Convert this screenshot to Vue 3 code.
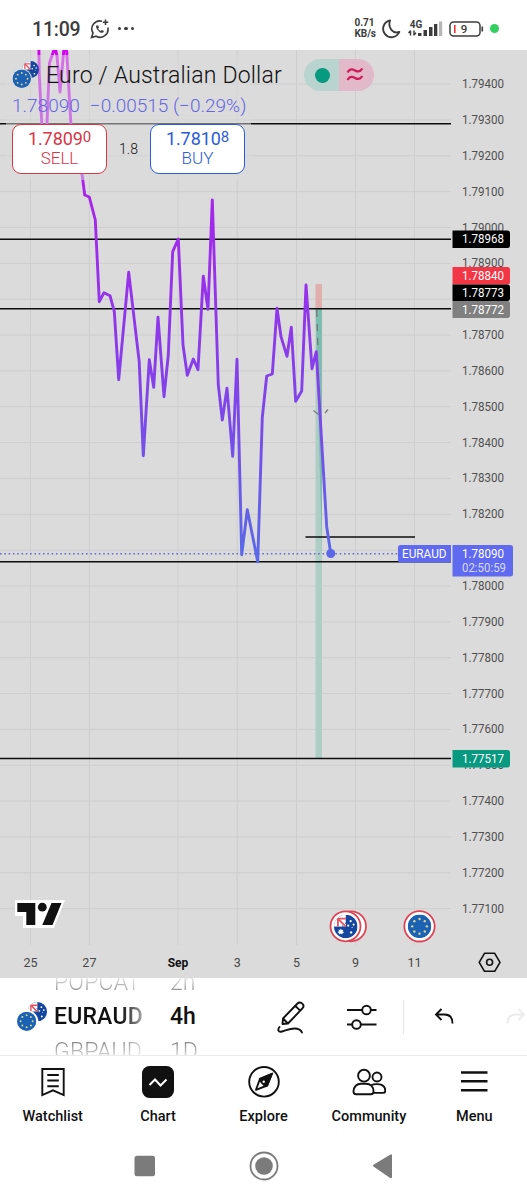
<template>
  <div class="app">
    <!-- shared flag symbols -->
    <svg class="defs" width="0" height="0">
      <symbol id="flag-eu" viewBox="0 0 24 24">
        <circle cx="12" cy="12" r="12" fill="#1b62b4" />
        <circle v-for="s in euStars" :key="s.id" :cx="s.x" :cy="s.y" r="1.2" fill="#e0d68a" />
      </symbol>
      <symbol id="flag-au" viewBox="0 0 24 24">
        <clipPath id="au-clip"><circle cx="12" cy="12" r="12" /></clipPath>
        <g clip-path="url(#au-clip)">
          <rect width="24" height="24" fill="#1446a0" />
          <rect width="12" height="12" fill="#fff" />
          <path d="M4 12V4h8" fill="none" stroke="#e8505b" stroke-width="1.8" />
          <path d="M4.5 4.5 12 12" stroke="#e8505b" stroke-width="1.8" />
          <path d="M8.5 12v-1.5l1.5 1.5zM12 8h-1.5l1.5 1.5z" fill="#1446a0" />
          <path d="m7 14 .8 1.5 1.7-.3-.5 1.6 1.3 1.2-1.6.5-.3 1.7-1.4-1.1-1.5 1.1-.3-1.7-1.6-.5L5 16.8l-.5-1.6 1.7.3z" fill="#fff" />
          <circle cx="17" cy="6.5" r="1.1" fill="#fff" />
          <circle cx="20" cy="10" r="1.1" fill="#fff" />
          <circle cx="14.5" cy="11" r="1.1" fill="#fff" />
          <circle cx="17.5" cy="18" r="1.2" fill="#fff" />
          <circle cx="18.5" cy="13" r=".6" fill="#fff" />
        </g>
      </symbol>
    </svg>

    <!-- status bar -->
    <header class="status">
      <span class="clock">11:09</span>
      <svg class="whatsapp" width="20" height="20" viewBox="0 0 20 20" fill="none" stroke="#3c3c3c" stroke-width="1.6">
        <path d="M12 2.2A8 8 0 0 0 3 14l-1.5 4.5L6 17.2A8 8 0 0 0 17.8 8.5" />
        <path d="M6.5 6.2c-1.2 1.5.2 4 2 5.7s4 2.7 5.3 1.2l-.2-1.3-1.8-.8-1 1c-1.3-.5-2.2-1.5-2.7-2.5l.9-1-.8-2z" fill="#3c3c3c" stroke="none" />
        <path d="M15.5.5v5.5M12.8 3.2h5.5" />
      </svg>
      <span class="dots"><i></i><i></i><i></i></span>
      <span class="speed">0.71<br />KB/s</span>
      <svg class="moon" width="20" height="20" viewBox="0 0 20 20" fill="none" stroke="#3c3c3c" stroke-width="1.9" stroke-linejoin="round">
        <path d="M9 1.5A8.4 8.4 0 1 0 18.3 13C12 15 6.5 9 9 1.5z" />
      </svg>
      <svg class="signal" width="35" height="20" viewBox="0 0 35 20">
        <text x="1.8" y="8.8" textLength="12.5" font-size="10.5" font-weight="700" fill="#3c3c3c" lengthAdjust="spacingAndGlyphs">4G</text>
        <path d="M2.5 11.5v5M0.5 14l2-2.2M6 11.5v5M6 16l2-2.2" stroke="#3c3c3c" stroke-width="1.5" />
        <rect x="10" y="14" width="3.5" height="3" fill="#3c3c3c" />
        <rect x="15.5" y="11" width="3.5" height="6" fill="#3c3c3c" />
        <rect x="21" y="8" width="3.5" height="9" fill="#3c3c3c" />
        <rect x="26" y="5" width="3.3" height="12" fill="#3c3c3c" />
        <rect x="31" y="2.5" width="3.2" height="14.5" fill="#b5b5b5" />
      </svg>
      <svg class="battery" width="35" height="16" viewBox="0 0 35 16">
        <rect x="1" y="1" width="30" height="14" rx="3.5" fill="none" stroke="#3c3c3c" stroke-width="1.5" />
        <rect x="32.5" y="5.5" width="1.6" height="5" fill="#3c3c3c" />
        <rect x="5" y="4" width="1.6" height="8" fill="#e53935" />
        <text x="11.8" y="12" font-size="11.5" font-weight="500" fill="#3c3c3c">9</text>
      </svg>
      <span class="green_dot"></span>
    </header>

    <!-- chart -->
    <section class="chart">
      <svg class="chart_svg" width="527" height="928" viewBox="0 50 527 928">
        <defs>
          <linearGradient id="price-line" gradientUnits="userSpaceOnUse" x1="0" y1="50" x2="0" y2="560">
            <stop offset="0" stop-color="#d500f0" />
            <stop offset="0.3" stop-color="#a626ea" />
            <stop offset="0.65" stop-color="#8440ea" />
            <stop offset="1" stop-color="#596ae8" />
          </linearGradient>
        </defs>

        <g stroke="#cecece" stroke-width="1">
          <line v-for="p in prices" :key="p.label" x1="0" :y1="p.y" x2="451" :y2="p.y" />
          <line v-for="d in dates" :key="d.label" :x1="d.x" y1="50" :x2="d.x" y2="945" />
        </g>

        <g class="scale">
          <text v-for="p in prices" :key="p.label" x="462" :y="p.y + 4" textLength="42" lengthAdjust="spacingAndGlyphs">{{ p.label }}</text>
        </g>
        <g class="dates">
          <text v-for="d in dates" :key="d.label" :x="d.x" y="966.5" :class="{ month: d.label === 'Sep' }">{{ d.label }}</text>
        </g>

        <!-- short position -->
        <rect x="315.5" y="284" width="6.5" height="25" fill="#dfaead" />
        <rect x="315.5" y="309" width="6.5" height="450" fill="#adcdc5" />
        <path d="M315.5 309h6.5v243z" fill="#76b9aa" opacity="0.85" />

        <!-- price levels -->
        <g stroke="#0c0c0c" stroke-width="1.5">
          <line x1="0" y1="123.7" x2="451" y2="123.7" />
          <line x1="0" y1="239.3" x2="451" y2="239.3" />
          <line x1="0" y1="308.7" x2="451" y2="308.7" />
          <line x1="0" y1="561.8" x2="451" y2="561.8" />
          <line x1="0" y1="758.6" x2="451" y2="758.6" />
          <line x1="305.5" y1="537" x2="415" y2="537" />
        </g>
        <path d="M316.8 310 318 351" stroke="#717a76" stroke-width="1.3" stroke-dasharray="7 7" />
        <path d="M313.5 410.5 318.5 414.5M325 413l3-3.5" stroke="#7a7f7c" stroke-width="1.3" />
        <line x1="0" y1="553.7" x2="398" y2="553.7" stroke="#6a6ad0" stroke-width="1.5" stroke-dasharray="1.6 2.7" />

        <polyline :points="line" fill="none" stroke="url(#price-line)" stroke-width="2.9" stroke-linejoin="round" />
        <circle cx="330.8" cy="553.5" r="4.5" fill="#5b67e8" />

        <!-- scale tags -->
        <g class="tags">
          <g v-for="t in tags" :key="t.label">
            <path :d="`M452.500 ${t.y}h55a2.5 2.5 0 0 1 2.5 2.5v${t.h - 5}a2.5 2.5 0 0 1-2.5 2.5h-55z`" :fill="t.color" />
            <text x="462" :y="t.y + t.h / 2 + 4.2" textLength="42" lengthAdjust="spacingAndGlyphs">{{ t.label }}</text>
          </g>
          <path d="M452.5 545h58a2.5 2.5 0 0 1 2.5 2.5v26.5a2.5 2.5 0 0 1-2.5 2.5h-58z" fill="#606af0" />
          <text x="462" y="557.7" textLength="42" lengthAdjust="spacingAndGlyphs">1.78090</text>
          <text x="462" y="571.9" textLength="44" lengthAdjust="spacingAndGlyphs" fill-opacity="0.75">02:50:59</text>
          <path d="M451 545h-50.5a2.5 2.5 0 0 0-2.5 2.5v12.5a2.5 2.5 0 0 0 2.5 2.5H451z" fill="#606af0" />
          <text x="402" y="557.7" textLength="44.5" lengthAdjust="spacingAndGlyphs">EURAUD</text>
        </g>

        <!-- TradingView logo -->
        <path d="M15 900h50l-11 28H23v-12h-8z" fill="#fff" />
        <path d="M17.3 903h18v22h-9v-13h-9z" fill="#111" />
        <circle cx="42.3" cy="907.2" r="4.4" fill="#111" />
        <path d="M51.5 903h10l-9 22H42.3z" fill="#111" />

        <!-- economic events -->
        <g fill="#fff" stroke="#df4454" stroke-width="1.8">
          <circle cx="351" cy="926.3" r="15" />
          <circle cx="345.5" cy="926.3" r="15" />
          <circle cx="419.5" cy="926.3" r="15.2" />
        </g>
        <use href="#flag-au" x="334" y="914.8" width="23.5" height="23.5" />
        <use href="#flag-eu" x="407.8" y="914.6" width="23.5" height="23.5" />

        <g fill="none" stroke="#111" stroke-width="1.6" stroke-linejoin="round">
          <path d="M484.5 953.3h10.2l5.3 9-5.3 9h-10.2l-5.3-9z" />
          <circle cx="489.6" cy="962.3" r="3" />
        </g>
      </svg>

      <div class="legend">
        <div class="legend_title">
          <svg class="pair" width="28" height="28" viewBox="0 0 28 28">
            <use href="#flag-au" x="10" y="0" width="17" height="17" />
            <circle cx="9.5" cy="18" r="10.5" fill="#dbdbdb" />
            <use href="#flag-eu" x="0.5" y="8.5" width="18.5" height="18.5" />
          </svg>
          <span class="name">Euro / Australian Dollar</span>
        </div>
        <div class="legend_values">
          <span class="last">1.78090</span>
          <span class="change">−0.00515 (−0.29%)</span>
        </div>
        <div class="trade">
          <button class="trade_button sell">
            <span class="quote">1.7809<sup>0</sup></span>
            <span class="side">SELL</span>
          </button>
          <span class="spread">1.8</span>
          <button class="trade_button buy">
            <span class="quote">1.7810<sup>8</sup></span>
            <span class="side">BUY</span>
          </button>
        </div>
      </div>

      <div class="market">
        <span class="market_open"><i></i></span>
        <span class="market_delay">
          <svg width="18" height="16" viewBox="0 0 18 16" fill="none" stroke="#cf1b5b" stroke-width="2.2">
            <path d="M1.5 5.5C4 1 7 2.3 9 3.5s5 1.7 7.3-2M1.5 13C4 8.5 7 9.8 9 11s5 1.7 7.3-2" />
          </svg>
        </span>
      </div>
    </section>

    <!-- symbol and interval wheels -->
    <section class="toolbar">
      <svg class="pair" width="30" height="30" viewBox="0 0 28 28">
        <use href="#flag-au" x="10" y="0" width="18" height="18" />
        <circle cx="9.5" cy="18.5" r="10.5" fill="#fff" />
        <use href="#flag-eu" x="0" y="9" width="18" height="18" />
      </svg>
      <div class="wheel symbols">
        <span class="previous">POPCAT</span>
        <span class="current">EURAUD</span>
        <span class="next">GBPAUD</span>
      </div>
      <div class="wheel intervals">
        <span class="previous">2h</span>
        <span class="current">4h</span>
        <span class="next">1D</span>
      </div>
      <div class="tools">
        <svg class="pencil" width="30" height="34" viewBox="0 0 30 34" fill="none" stroke="#111" stroke-width="1.9" stroke-linejoin="round" stroke-linecap="round">
          <path d="M6 18.5 20.5 3.5c1.5-1.5 3.5-1.2 4.8.1s1.6 3.3.1 4.8L11 23.5l-5.5.5zM6 18.5l5 5M18.3 5.8l4.9 4.9" />
          <path d="M2.5 27c-2 2.5-1.5 5.500 2.500 4.500 5-1.300 7-3 12.500-3 4.500 0 6.500 1.500 7.500 4" />
        </svg>
        <svg class="sliders" width="30" height="28" viewBox="0 0 30 28" fill="none" stroke="#111" stroke-width="1.9">
          <path d="M0 7h15M24 7h5.5M0 21.5h5M14 21.5h15.5" />
          <circle cx="19.5" cy="7" r="4.3" />
          <circle cx="9.5" cy="21.5" r="4.3" />
        </svg>
        <span class="divider"></span>
        <svg class="undo" width="20" height="17" viewBox="0 0 20 17" fill="none" stroke="#111" stroke-width="1.9">
          <path d="M7.5 1 2 6.5 7.5 12M2 6.5h8.5c5 0 8 3 8 9" />
        </svg>
        <svg class="redo" width="20" height="17" viewBox="0 0 20 17" fill="none" stroke="#ececec" stroke-width="1.9">
          <path d="M12.5 1 18 6.5 12.5 12M18 6.5H9.5c-5 0-8 3-8 9" />
        </svg>
      </div>
    </section>

    <!-- bottom tabs -->
    <nav class="tabs">
      <a class="tab">
        <svg width="32" height="32" viewBox="0 0 32 32" fill="none" stroke="#111" stroke-width="1.9">
          <path d="M5.3 3h21.400v26L16 24.300 5.300 29zM10.300 9h11.500M10.300 14.500h11.500M10.300 20.300h11.500" />
        </svg>
        <span>Watchlist</span>
      </a>
      <a class="tab">
        <svg width="32" height="32" viewBox="0 0 32 32">
          <rect width="32" height="32" rx="7.5" fill="#111" />
          <path d="m7.5 19 5.500-5.500 5.500 6 6-6" fill="none" stroke="#fff" stroke-width="2" />
        </svg>
        <span>Chart</span>
      </a>
      <a class="tab">
        <svg width="32" height="32" viewBox="0 -1 32 32" fill="none" stroke="#111" stroke-width="1.9">
          <circle cx="16" cy="14.8" r="14.8" />
          <path d="M8 22.800 12 11.800 23.800 7 19.200 18.500z" stroke-linejoin="round" />
          <path d="M12 11.800 23.800 7 19.200 18.500l-3-.5-3-3z" fill="#111" />
          <circle cx="15.700" cy="14.800" r="1.200" fill="#fff" stroke="none" />
        </svg>
        <span>Explore</span>
      </a>
      <a class="tab">
        <svg width="34" height="32" viewBox="0 0 34 32" fill="none" stroke="#111" stroke-width="1.9">
          <circle cx="12" cy="9.700" r="5.900" />
          <circle cx="25" cy="11" r="4.500" />
          <path d="M1.500 25.500c0-5 3.500-7.700 7.500-7.700h5c4.300 0 7.500 2.700 7.500 7.700 0 1.800-.8 2.700-2.500 2.700H4c-1.700 0-2.500-.9-2.500-2.700zM19.500 19c1.500-.8 3-.9 5-.9 5.500 0 8.800 2.500 8.800 6.500 0 1.600-.8 2.300-2.200 2.300H21" />
        </svg>
        <span>Community</span>
      </a>
      <a class="tab">
        <svg width="32" height="32" viewBox="0 0 32 32" stroke="#111" stroke-width="2.600">
          <path d="M3 6.500h26.500M3 15.200h26.500M3 24.200h26.500" />
        </svg>
        <span>Menu</span>
      </a>
    </nav>

    <!-- system navigation -->
    <footer class="system">
      <svg width="30" height="30" viewBox="0 0 30 30"><rect x="4.500" y="4.800" width="20.500" height="20.500" rx="2.500" fill="#7b7b7b" /></svg>
      <svg width="30" height="30" viewBox="0 0 30 30">
        <circle cx="15" cy="15" r="13.500" fill="none" stroke="#7b7b7b" stroke-width="1.800" />
        <circle cx="15" cy="15" r="8.800" fill="#7b7b7b" />
      </svg>
      <svg width="30" height="30" viewBox="0 0 30 30"><path d="M6 14.700 23 4.300v22z" fill="#7b7b7b" stroke="#7b7b7b" stroke-width="2" stroke-linejoin="round" /></svg>
    </footer>
  </div>
</template>

<script setup>
// stars on the EU flag
const euStars = Array.from({ length: 8 }, (_, i) => ({
  id: i,
  x: 12 + 7.5 * Math.cos((i * Math.PI) / 4),
  y: 12 + 7.5 * Math.sin((i * Math.PI) / 4)
}))

// price scale, one row every 0.00100
const prices = Array.from({ length: 24 }, (_, i) => ({
  label: (1.794 - i * 0.001).toFixed(5),
  y: 84.1 + i * 35.85
}))

const dates = [
  { label: '25', x: 30.5 },
  { label: '27', x: 89.4 },
  { label: 'Sep', x: 178 },
  { label: '3', x: 237.2 },
  { label: '5', x: 296.5 },
  { label: '9', x: 355.5 },
  { label: '11', x: 414.5 }
]

const tags = [
  { label: '1.78968', y: 230.5, h: 17.5, color: '#000' },
  { label: '1.78840', y: 267, h: 17.5, color: '#f23645' },
  { label: '1.78773', y: 284.5, h: 16.5, color: '#000' },
  { label: '1.78772', y: 301, h: 17, color: '#808080' },
  { label: '1.77517', y: 750, h: 17.5, color: '#089981' }
]

const points = [
  [38.8, 45], [39.3, 75], [42, 128], [46.8, 128], [49.5, 63], [55, 47], [57, 56], [60, 92],
  [64, 48], [66.5, 48], [71, 126], [76, 150], [82.3, 176], [84.7, 195], [89.3, 197], [95.3, 220],
  [99.3, 301.7], [104, 292.7], [110, 295.7], [114.3, 311.7], [118.7, 379.7], [128.7, 272.3],
  [139.2, 361.7], [143.3, 455.7], [149.3, 359.7], [153.7, 387.3], [158, 317.3], [164, 396.7],
  [168.3, 355], [172.7, 251.7], [178.3, 239], [183, 345], [187.3, 375.3], [193.3, 359],
  [198, 369.7], [203.3, 276.3], [208, 309.3], [212.3, 200], [218.3, 385], [222.3, 420],
  [227, 388.3], [232.7, 456.3], [237, 359.3], [241.7, 554.7], [247.3, 509.7], [257.7, 561.7],
  [262.3, 417.3], [266.7, 376], [272.3, 374], [277, 308.3], [281, 336.7], [287, 356.3],
  [291.3, 327.3], [295.7, 401.3], [301.7, 391], [306, 285], [312, 368.7], [316.3, 351.7],
  [326.7, 526.7], [330.7, 553.3]
]
const line = points.map((p) => p.join(',')).join(' ')
</script>

<style>
body {
  margin: 0;
  background: #fff;
}
</style>

<style scoped>
.app {
  width: 527px;
  height: 1200px;
  display: flex;
  flex-direction: column;
  overflow: hidden;
  background: #fff;
  color: #111;
  font-family: Roboto, 'Liberation Sans', sans-serif;
}

svg {
  display: block;
  flex-shrink: 0;
}

.defs {
  position: absolute;
}

/* status bar */
.status {
  height: 50px;
  flex-shrink: 0;
  box-sizing: border-box;
  padding: 7px 28px 0 32px;
  display: flex;
  align-items: center;
  color: #3c3c3c;
}

.clock {
  width: 58px;
  margin-top: 1px;
  font-size: 19.5px;
  font-weight: 500;
  letter-spacing: -0.2px;
}

.dots {
  display: flex;
  gap: 3px;
  margin-left: 8px;
}

.dots i {
  width: 3.4px;
  height: 3.4px;
  border-radius: 50%;
  background: #3c3c3c;
}

.speed {
  margin-left: auto;
  font-size: 10px;
  line-height: 10.5px;
  font-weight: 700;
  white-space: nowrap;
}

.moon {
  margin-left: 5px;
}

.signal {
  margin-left: 7px;
}

.battery {
  margin-left: 6px;
}

.green_dot {
  width: 9px;
  height: 9px;
  margin-left: 6px;
  border-radius: 50%;
  background: #34cf62;
}

/* chart */
.chart {
  position: relative;
  height: 928px;
  flex-shrink: 0;
  background: #dbdbdb;
}

.scale text,
.tags text,
.dates text {
  font-size: 12.5px;
}

.scale text {
  fill: #505050;
}

.tags text {
  fill: #fff;
}

.dates text {
  fill: #484848;
  text-anchor: middle;
}

.dates .month {
  font-size: 12px;
  font-weight: 700;
  fill: #111;
}

.legend {
  position: absolute;
  left: 6px;
  top: 5px;
  width: 245px;
  height: 125px;
  box-sizing: border-box;
  padding-left: 6px;
  background: rgba(219, 219, 219, 0.5);
}

.legend_title {
  display: flex;
  align-items: center;
  height: 40px;
  white-space: nowrap;
}

.name {
  margin-left: 6px;
  font-size: 23px;
  font-weight: 300;
  letter-spacing: 0.2px;
}

.legend_values {
  display: flex;
  gap: 10px;
  height: 22px;
  line-height: 22px;
  font-size: 19px;
  font-weight: 300;
  color: #6366e3;
  white-space: nowrap;
}

.trade {
  display: flex;
  align-items: center;
  padding-top: 7px;
  width: 233px;
}

.trade_button {
  width: 95px;
  height: 50px;
  box-sizing: border-box;
  padding: 3px 0 0;
  display: flex;
  flex-direction: column;
  align-items: center;
  background: #fff;
  border: 1.5px solid;
  border-radius: 9px;
  font-family: inherit;
}

.sell {
  color: #d93548;
  border-color: #d93548;
}

.buy {
  color: #2c5bd9;
  border-color: #2c5bd9;
}

.quote {
  font-size: 18px;
  line-height: 21px;
  letter-spacing: -0.1px;
}

.quote sup {
  font-size: 15px;
  line-height: 0;
  vertical-align: 3px;
}

.side {
  font-size: 17px;
  line-height: 18px;
  font-weight: 300;
}

.spread {
  flex: 1;
  text-align: center;
  font-size: 14px;
  font-weight: 300;
}

.market {
  position: absolute;
  left: 304px;
  top: 9px;
  width: 70px;
  height: 32px;
  display: flex;
  border-radius: 16px;
  overflow: hidden;
}

.market span {
  flex: 1;
  display: flex;
  align-items: center;
  justify-content: center;
}

.market_open {
  background: #b9d4cf;
}

.market_open i {
  width: 15px;
  height: 15px;
  margin-left: 2px;
  border-radius: 50%;
  background: #089981;
}

.market_delay {
  background: #e2b9c8;
}

.market_delay svg {
  margin-left: -3px;
}

/* toolbar */
.toolbar {
  height: 77px;
  flex-shrink: 0;
  display: flex;
  align-items: center;
  overflow: hidden;
  border-bottom: 1px solid #ebebeb;
  padding-left: 17px;
}

.wheel {
  display: flex;
  flex-direction: column;
  padding-top: 2px;
  font-size: 23px;
  line-height: 34.5px;
  font-weight: 300;
}

.wheel .current {
  color: #111;
  font-weight: 500;
}

/* neighbours fade out towards the edge of the wheel */
.wheel .previous {
  color: transparent;
  background: linear-gradient(#e4e4e4 35%, #8c8c8c 75%);
  -webkit-background-clip: text;
  background-clip: text;
}

.wheel .next {
  color: transparent;
  background: linear-gradient(#8c8c8c 25%, #dedede 65%);
  -webkit-background-clip: text;
  background-clip: text;
}

.symbols {
  width: 96px;
  margin-left: 7px;
  letter-spacing: 0.2px;
  -webkit-mask-image: linear-gradient(90deg, #000 70%, rgba(0, 0, 0, 0.2) 98%);
  mask-image: linear-gradient(90deg, #000 70%, rgba(0, 0, 0, 0.2) 98%);
}

.intervals {
  width: 60px;
  margin-left: 20px;
}

.tools {
  display: flex;
  align-items: center;
  margin-left: 47px;
}

.sliders {
  margin-left: 40px;
}

.divider {
  width: 1px;
  height: 34px;
  margin-left: 26px;
  background: #e6e6e6;
}

.undo {
  margin-left: 30px;
}

.redo {
  margin-left: 52px;
}

/* bottom tabs */
.tabs {
  display: flex;
  flex-shrink: 0;
  height: 80px;
}

.tab {
  flex: 1;
  display: flex;
  flex-direction: column;
  align-items: center;
  padding-top: 10px;
  font-size: 14.5px;
  font-weight: 500;
}

.tab span {
  margin-top: 9px;
  line-height: 19px;
}

/* system navigation */
.system {
  display: flex;
  justify-content: center;
  gap: 89px;
  padding: 15px 0 0;
}
</style>
